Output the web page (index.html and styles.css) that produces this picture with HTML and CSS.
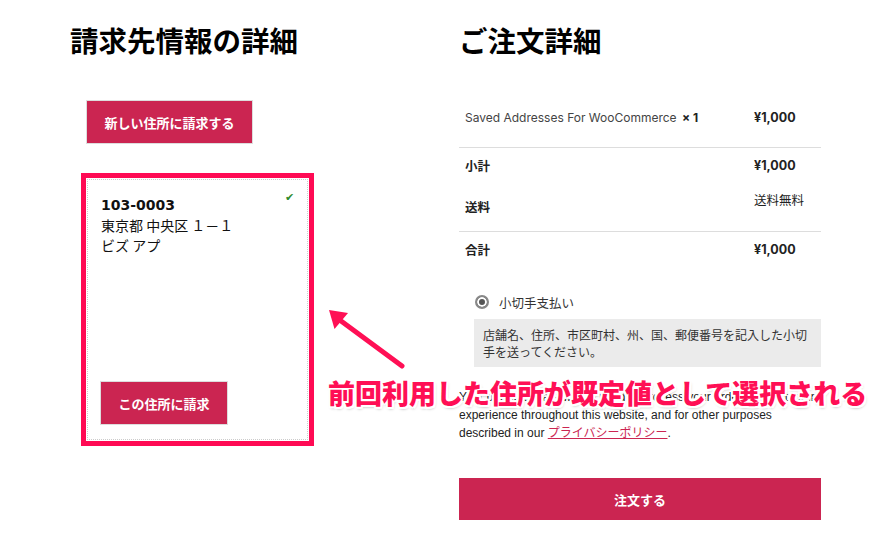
FILE: index.html
```html
<!DOCTYPE html>
<html lang="ja">
<head>
  <meta charset="UTF-8" />
  <title>チェックアウト</title>
  <link rel="stylesheet" href="styles.css">
</head>
<body>

<div class="checkout">
  <div class="billing">
    <h2 class="title">請求先情報の詳細</h2>
    <button class="btn new-address">新しい住所に請求する</button>

    <div class="address-card">
      <span class="check">&#10004;</span>
      <div class="address">
        <strong>103-0003</strong><br>
        東京都 中央区 １－１<br>
        ビズ アプ
      </div>
      <button class="btn use-address">この住所に請求</button>
    </div>
  </div>

  <div class="order">
    <h2 class="title">ご注文詳細</h2>

    <div class="order-table">
      <div class="row item">
        <span class="label">Saved Addresses For WooCommerce <b class="qty">× 1</b></span>
        <span class="value">¥1,000</span>
      </div>
      <div class="row sub">
        <span class="label">小計</span>
        <span class="value">¥1,000</span>
      </div>
      <div class="row ship">
        <span class="label">送料</span>
        <span class="value free">送料無料</span>
      </div>
      <div class="row sub total">
        <span class="label">合計</span>
        <span class="value">¥1,000</span>
      </div>
    </div>

    <div class="payment">
      <label class="method"><span class="radio"></span>小切手支払い</label>
      <div class="method-box">店舗名、住所、市区町村、州、国、郵便番号を記入した小切手を送ってください。</div>
    </div>

    <p class="privacy">Your personal data will be used to process your order, support your experience throughout this website, and for other purposes described in our <a href="#">プライバシーポリシー</a>.</p>

    <button class="btn place-order">注文する</button>
  </div>
</div>

<!-- 注釈 -->
<svg class="arrow" width="100" height="75" viewBox="0 0 100 75">
  <line x1="81" y1="66" x2="16" y2="18" stroke="#ff0f55" stroke-width="5" stroke-linecap="round"/>
  <polygon points="8,10 13.5,29 27,13" fill="#ff0f55"/>
</svg>
<div class="note">前回利用した住所が既定値として選択される</div>

</body>
</html>
```

FILE: styles.css
```css
body {
  margin: 0;
  background: #fff;
  color: #222;
  font-family: "Noto Sans CJK JP", sans-serif;
}

.checkout {
  display: flex;
  padding: 23px 0 0 70px;
}

.billing {
  width: 389px;
}

.order {
  width: 362px;
}

.title {
  margin: 0;
  font-size: 28.5px;
  line-height: 34px;
  font-weight: bold;
  color: #000;
}

.btn {
  display: block;
  border: 1px solid #ddd;
  background: #cb2551;
  color: #fff;
  font-family: "Noto Sans CJK JP", sans-serif;
  font-size: 13px;
  font-weight: bold;
  cursor: pointer;
}

.new-address {
  width: 167px;
  height: 44px;
  margin: 43px 0 0 16px;
}

/* 住所カード */
.address-card {
  position: relative;
  box-sizing: border-box;
  width: 221px;
  height: 261px;
  margin: 35px 0 0 17px;
  padding: 14px 14px 14px 12px;
  border: 1px dotted #ccc;
  outline: 5px solid #ff0a54;
  outline-offset: 1px;
  display: flex;
  flex-direction: column;
}

.address {
  padding-left: 1px;
  font-size: 14px;
  line-height: 20px;
  color: #111;
}

.address strong {
  font-family: "DejaVu Sans", sans-serif;
  font-size: 14px;
}

.check {
  position: absolute;
  top: 8px;
  right: 13px;
  color: #2e8b2e;
  font-size: 11px;
}

.use-address {
  width: 128px;
  height: 44px;
  margin-top: auto;
}

/* 注文テーブル */
.order-table {
  margin-top: 30px;
  font-family: Inter, "Noto Sans CJK JP", sans-serif;
  font-size: 12.5px;
  color: #222;
}

.row {
  display: flex;
  align-items: center;
  border-bottom: 1px solid #ddd;
}

.row .label {
  width: 289px;
  padding-left: 6px;
}

.row .value {
  font-weight: bold;
}

.item {
  height: 60px;
}

.item .label {
  font-size: 12px;
  color: #444;
}

.qty {
  margin-left: 2px;
  color: #222;
}

.sub {
  height: 34px;
  border-bottom: none;
}

.sub .label,
.ship .label {
  font-weight: bold;
}

.ship {
  height: 49px;
}

.ship .free {
  align-self: flex-start;
  padding-top: 10px;
  font-weight: normal;
  line-height: 18px;
}

/* 支払い */
.payment {
  margin-top: 26px;
  font-size: 12.5px;
  color: #333;
}

.method {
  display: flex;
  align-items: center;
  height: 20px;
  padding-left: 16px;
}

.radio {
  box-sizing: border-box;
  width: 14px;
  height: 14px;
  margin-right: 10px;
  border: 2px solid #888;
  border-radius: 50%;
  background: #555;
  box-shadow: inset 0 0 0 2px #fff;
}

.method-box {
  margin: 7px 0 0 15px;
  padding: 7px 9px;
  background: #ebebeb;
  font-size: 12px;
  line-height: 17px;
}

.privacy {
  margin: 21px 0 0;
  font-family: "Liberation Sans", Arial, "Noto Sans CJK JP", sans-serif;
  font-size: 12px;
  line-height: 18px;
  color: #222;
}

.privacy a {
  color: #cb2551;
}

.place-order {
  width: 362px;
  height: 42px;
  margin-top: 36px;
  border: none;
}

/* 注釈 */
.arrow {
  position: absolute;
  left: 321px;
  top: 300px;
}

.note {
  position: absolute;
  left: 328px;
  top: 376px;
  font-size: 27px;
  line-height: 34px;
  font-weight: 900;
  color: #ff0f55;
  white-space: nowrap;
  text-shadow:
    2px 0 0 #fff, -2px 0 0 #fff, 0 2px 0 #fff, 0 -2px 0 #fff,
    2px 2px 0 #fff, -2px -2px 0 #fff, 2px -2px 0 #fff, -2px 2px 0 #fff,
    1px 2px 3px rgba(0,0,0,0.35);
}
```
